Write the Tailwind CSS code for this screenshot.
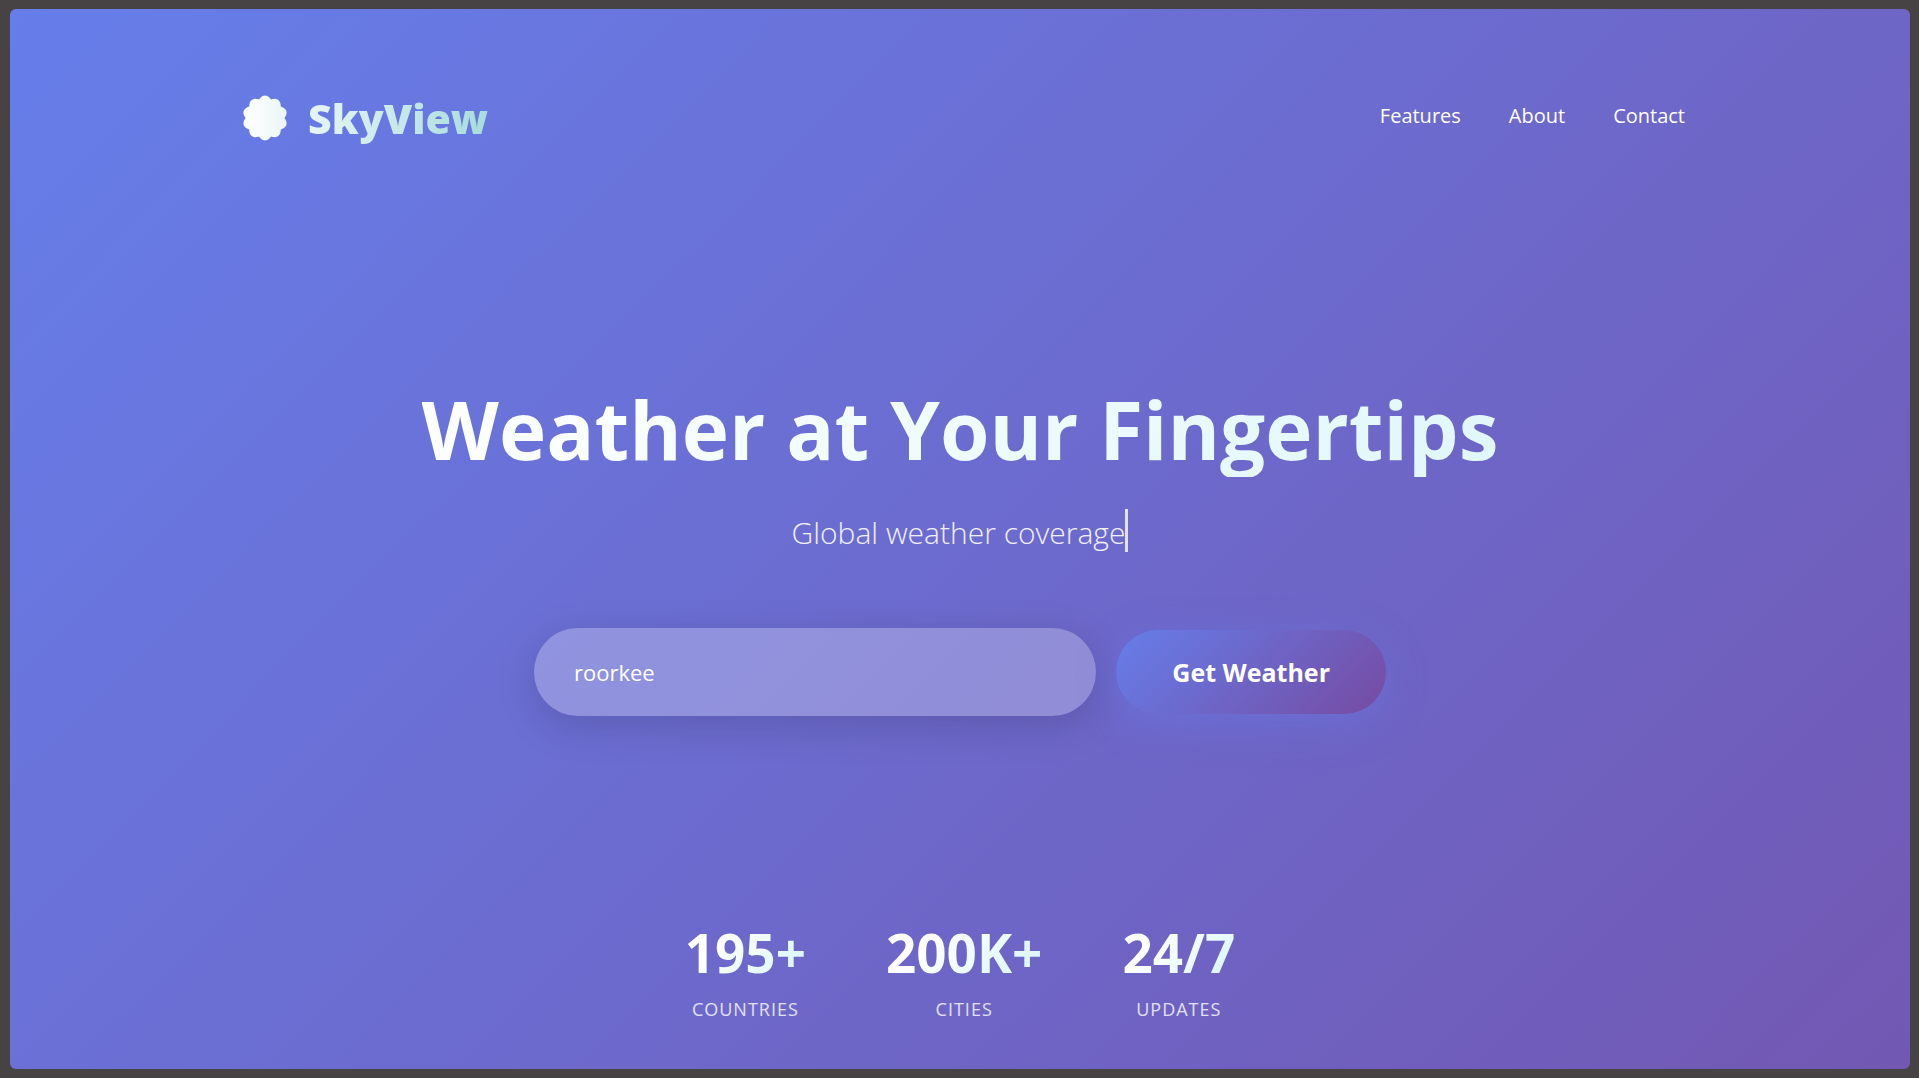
<!DOCTYPE html>
<html lang="en">
<head>
<meta charset="utf-8">
<meta name="viewport" content="width=device-width, initial-scale=1">
<title>SkyView</title>
<script src="https://cdn.jsdelivr.net/npm/@tailwindcss/browser@4"></script>
</head>
<body class="flex min-h-screen bg-[#474244] py-[9px] pr-[9px] pl-[10px] font-['Open_Sans','Noto_Sans',sans-serif] text-white">
<div class="flex flex-1 flex-col overflow-hidden rounded-md bg-linear-[135deg] from-[#667eea] to-[#7258b3]">
  <header class="mx-auto flex w-full max-w-[1450px] items-center justify-between pt-[79px]">
    <a href="#" class="flex items-center gap-5 bg-linear-to-r from-white to-[#a8dcdc] bg-clip-text text-[41px] leading-[60px] font-extrabold text-transparent">
      <svg class="ml-[7px] size-[46px]" viewBox="-23 -23 46 46" aria-hidden="true">
        <defs><linearGradient id="petals"><stop offset="0" stop-color="#ffffff"/><stop offset="1" stop-color="#ebf6f6"/></linearGradient></defs>
        <path id="flower" fill="url(#petals)" d=""/>
      </svg>
      <span>SkyView</span>
    </a>
    <nav class="flex gap-12 pb-1 text-[20px] leading-8">
      <a href="#features">Features</a>
      <a href="#about">About</a>
      <a href="#contact">Contact</a>
    </nav>
  </header>

  <main class="flex flex-col items-center px-6 pt-[233px] pb-10">
    <h1 class="bg-linear-[135deg] from-white to-[#e0f7fa] bg-clip-text text-center text-[80px] leading-[96px] font-bold text-transparent">Weather at Your Fingertips</h1>
    <p class="mt-8 border-r-3 border-white/80 pt-1 text-[30px] leading-[39px] font-light text-white/90">Global weather coverage</p>

    <form class="mt-19 flex w-full max-w-[852px] items-center gap-5">
      <input type="text" aria-label="City" value="roorkee" class="h-22 min-w-0 flex-1 rounded-full bg-white/25 px-10 text-[22px] text-white shadow-[0_10px_40px_rgb(0_0_0/0.15)] outline-none">
      <button type="button" class="h-21 rounded-full bg-linear-[135deg] from-[#667eea] to-[#764ba2] px-14 pt-0.5 text-[25px] font-bold shadow-[0_10px_40px_rgb(102_126_234/0.4)]">Get Weather</button>
    </form>

    <dl class="mt-[207px] flex gap-20 text-center">
      <div class="flex flex-col-reverse">
        <dt class="mt-3 text-[18px] leading-7 tracking-[1px] text-white/80 uppercase">Countries</dt>
        <dd class="bg-linear-[135deg] from-white from-30% to-[#d4f4f8] bg-clip-text text-[53px] leading-[60px] font-bold text-transparent">195+</dd>
      </div>
      <div class="flex flex-col-reverse">
        <dt class="mt-3 text-[18px] leading-7 tracking-[1px] text-white/80 uppercase">Cities</dt>
        <dd class="bg-linear-[135deg] from-white from-30% to-[#d4f4f8] bg-clip-text text-[53px] leading-[60px] font-bold text-transparent">200K+</dd>
      </div>
      <div class="flex flex-col-reverse">
        <dt class="mt-3 text-[18px] leading-7 tracking-[1px] text-white/80 uppercase">Updates</dt>
        <dd class="bg-linear-[135deg] from-white from-30% to-[#d4f4f8] bg-clip-text text-[53px] leading-[60px] font-bold text-transparent">24/7</dd>
      </div>
    </dl>
  </main>
</div>
<script>
// Ten rounded petals: the radius swells at every 36 degrees.
let d = '';
for (let a = 0; a < 360; a += 2) {
  const t = a * Math.PI / 180;
  const r = 19.4 + 3 * Math.abs(Math.cos(5 * t));
  d += (a ? 'L' : 'M') + (r * Math.sin(t)).toFixed(2) + ' ' + (-r * Math.cos(t)).toFixed(2);
}
document.getElementById('flower').setAttribute('d', d + 'Z');
</script>
</body>
</html>
